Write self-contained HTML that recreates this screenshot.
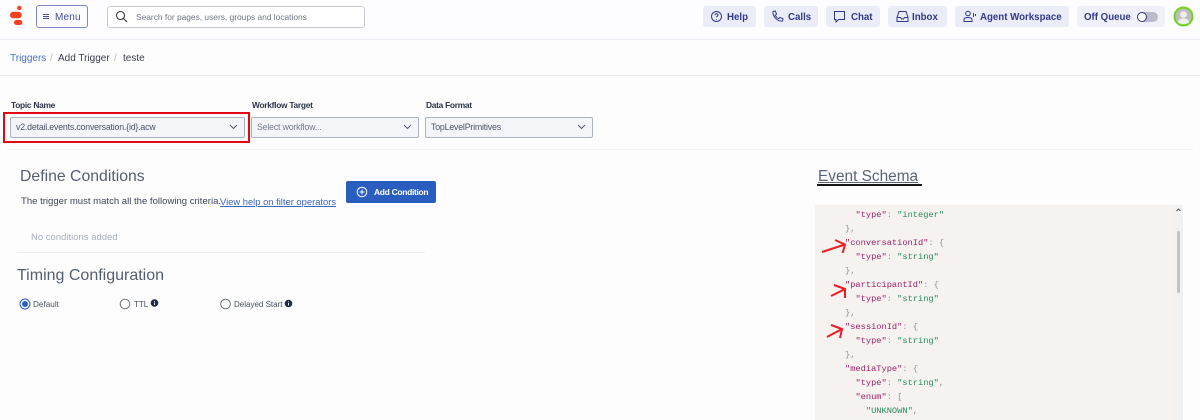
<!DOCTYPE html>
<html><head><meta charset="utf-8"><style>
html,body{margin:0;padding:0;width:1200px;height:420px;overflow:hidden;background:#fdfdfe;font-family:"Liberation Sans",sans-serif}
.a{position:absolute;white-space:nowrap}
.tb{position:absolute;top:6px;height:21px;background:#eaecf8;border-radius:3px;color:#33398a;font-weight:bold;font-size:9.7px;line-height:23px}
.tb span{position:absolute;top:0}
.tb svg{position:absolute;top:4px;left:7px}
.lab{position:absolute;top:98.500px;font-size:8.400px;letter-spacing:-.28px;font-weight:bold;color:#2c3448;line-height:12px;white-space:nowrap}
.sel{position:absolute;top:117px;height:19px;background:#f3f5f9;border:1px solid #adb2bf;border-radius:2px;font-size:8.800px;letter-spacing:-.19px;line-height:19px;color:#4c5468;white-space:nowrap}
.sel span{position:absolute;left:5px}
.sel svg{position:absolute;right:6px;top:6px}
.h{position:absolute;font-size:16px;color:#555e70;white-space:nowrap;line-height:20px}
.c{position:absolute;left:845px;font:8.700px/14px "Liberation Mono",monospace;white-space:pre;color:#8f959c}
.k{color:#a01f66}.s{color:#288a5c}
</style></head><body>
<div class="a" style="left:0;top:0;width:1200px;height:39px;background:#fdfdff;border-bottom:1px solid #e9e9f4"></div>
<svg class="a" style="left:9px;top:5px" width="14" height="22"><circle cx="10.300" cy="3" r="2.200" fill="#f5401e"/><rect x="1" y="6.700" width="11.700" height="6.600" rx="3.300" fill="#f5401e"/><rect x="5" y="15" width="8.300" height="5" rx="2.500" fill="#f5401e"/></svg>
<div class="a" style="left:36px;top:5px;width:50px;height:21px;border:1px solid #7d87c4;border-radius:3px;background:#fbfbff"></div>
<svg class="a" style="left:43px;top:14px" width="7" height="6"><path d="M0 .5H6M0 2.500H6M0 4.500H6" stroke="#4a51a0" stroke-width=".9"/></svg>
<div class="a" style="left:55px;top:7px;font-size:10px;line-height:21px;color:#454c9c;letter-spacing:.2px">Menu</div>
<div class="a" style="left:107px;top:6px;width:256px;height:20px;border:1px solid #c6c8d0;border-radius:3px;background:#fff"></div>
<svg class="a" style="left:115px;top:10px" width="13" height="13" fill="none" stroke="#30343c" stroke-width="1.100"><circle cx="5.500" cy="5.500" r="4"/><path d="M8.500 8.500L12 12"/></svg>
<div class="a" style="left:136px;top:6px;font-size:8.400px;line-height:22px;color:#6f7480">Search for pages, users, groups and locations</div>
<div class="tb" style="left:703px;width:53px"><svg width="13" height="13" fill="none" stroke="#33398a"><circle cx="6.500" cy="6.500" r="5"/><path d="M5 5.200c.2-2 3.200-1.800 3 0 0 1-1.500 1-1.500 2.200M6.500 9v.8"/></svg><span style="left:24px">Help</span></div>
<div class="tb" style="left:764px;width:54px"><svg width="13" height="13" fill="none" stroke="#33398a"><path d="M2 1.500L4.200 1l1.400 3L4.300 5.200c.7 1.700 1.900 2.900 3.500 3.500L9 7.400l3 1.400-.5 2.200c-5 .8-10-4.500-9.500-9.500z"/></svg><span style="left:24px">Calls</span></div>
<div class="tb" style="left:826px;width:54px"><svg width="13" height="13" fill="none" stroke="#33398a"><path d="M1.500 1.500h10v8H5.500L3 12V9.500H1.500z"/></svg><span style="left:25px">Chat</span></div>
<div class="tb" style="left:888px;width:59px"><svg width="13" height="13" style="left:8px" fill="none" stroke="#33398a"><path d="M3 1.500h7l2 6v4H1v-4zM1 7.500h3.500l1 1.500h2l1-1.500H12"/></svg><span style="left:24px">Inbox</span></div>
<div class="tb" style="left:955px;width:114px"><svg width="13" height="13" style="left:8px" fill="none" stroke="#33398a"><circle cx="5" cy="3.500" r="2.300"/><path d="M1 11.500V9.500c0-1.500 1.500-2 4-2s4 .5 4 2v2zM10.500 3v4M12.500 4v2"/></svg><span style="left:25px">Agent Workspace</span></div>
<div class="tb" style="left:1077px;width:88px;background:#eff0fa"><span style="left:7px">Off Queue</span></div>
<div class="a" style="left:1137px;top:12px;width:21px;height:10px;border-radius:5px;background:#b9bcc8"></div>
<div class="a" style="left:1137px;top:12px;width:8px;height:8px;border-radius:50%;border:1.200px solid #33398a;background:#fff"></div>
<svg class="a" style="left:1173px;top:6px" width="21" height="21"><circle cx="10.500" cy="10.500" r="9" fill="#bdbdbd" stroke="#72d41f" stroke-width="2"/><circle cx="10.500" cy="8.500" r="3.300" fill="#f0f0f0"/><path d="M5 16.500c0-5.500 11-5.500 11 0-3 2-8 2-11 0z" fill="#f0f0f0"/></svg>

<div class="a" style="left:10px;top:52px;font-size:10px;line-height:14px;color:#4a6fc0">Triggers</div>
<div class="a" style="left:50px;top:52px;font-size:10px;line-height:14px;color:#b5b8c0">/</div>
<div class="a" style="left:58px;top:52px;font-size:10px;line-height:14px;color:#3a3f4a">Add Trigger</div>
<div class="a" style="left:114px;top:52px;font-size:10px;line-height:14px;color:#b5b8c0">/</div>
<div class="a" style="left:123px;top:52px;font-size:10px;line-height:14px;color:#3a3f4a">teste</div>
<div class="a" style="left:0;top:75px;width:1200px;height:1px;background:#e9e9f0"></div>

<div class="lab" style="left:11px">Topic Name</div>
<div class="lab" style="left:252px">Workflow Target</div>
<div class="lab" style="left:426px">Data Format</div>
<div class="sel" style="left:10px;width:233px"><span>v2.detail.events.conversation.{id}.acw</span><svg width="9" height="6" fill="none" stroke="#555c6e"><path d="M1 1l3.500 3.500L8 1"/></svg></div>
<div class="sel" style="left:251px;width:166px;color:#767c8a"><span>Select workflow...</span><svg width="9" height="6" fill="none" stroke="#555c6e"><path d="M1 1l3.500 3.500L8 1"/></svg></div>
<div class="sel" style="left:425px;width:166px"><span>TopLevelPrimitives</span><svg width="9" height="6" fill="none" stroke="#555c6e"><path d="M1 1l3.500 3.500L8 1"/></svg></div>
<div class="a" style="left:3px;top:112px;width:243px;height:27px;border:2px solid #e30613"></div>
<div class="a" style="left:7px;top:149px;width:1186px;height:1px;background:#f0f0f3"></div>

<div class="h" style="left:20px;top:167px;font-size:15.800px">Define Conditions</div>
<div class="a" style="left:21px;top:194.500px;font-size:9.550px;line-height:13px;color:#3f4654">The trigger must match all the following criteria.</div>
<div class="a" style="left:220px;top:194.500px;font-size:9.400px;line-height:13px;color:#3f66bf;text-decoration:underline">View help on filter operators</div>
<div class="a" style="left:346px;top:181px;width:90px;height:22px;background:#2a5dc0;border-radius:2px"></div>
<svg class="a" style="left:356px;top:186px" width="12" height="12" fill="none" stroke="#fff"><circle cx="6" cy="6" r="4.800"/><path d="M6 3.500v5M3.500 6h5"/></svg>
<div class="a" style="left:374px;top:180.500px;font-size:8.500px;letter-spacing:-.33px;font-weight:bold;line-height:22px;color:#fff">Add Condition</div>
<div class="a" style="left:31px;top:231px;font-size:9.500px;line-height:13px;color:#a6adbb">No conditions added</div>
<div class="a" style="left:17px;top:252px;width:408px;height:1px;background:#eeeff2"></div>
<div class="h" style="left:17px;top:266px">Timing Configuration</div>
<svg class="a" style="left:19px;top:298px" width="13" height="13"><circle cx="6" cy="6" r="5" fill="#fff" stroke="#2a5dc0" stroke-width="1"/><circle cx="6" cy="6" r="3" fill="#2a5dc0"/></svg>
<div class="a" style="left:33px;top:298px;font-size:8.200px;line-height:13px;color:#4a505e">Default</div>
<svg class="a" style="left:119px;top:298px" width="13" height="13"><circle cx="6" cy="6" r="4.800" fill="#fff" stroke="#6e7380"/></svg>
<div class="a" style="left:134px;top:298px;font-size:8px;line-height:13px;color:#4a505e">TTL</div>
<svg class="a" style="left:150px;top:299px" width="9" height="9"><circle cx="4.500" cy="4" r="3.800" fill="#1f2a44"/><path d="M4.500 2v.8M4.500 3.500v2.500" stroke="#fff" stroke-width=".9"/></svg>
<svg class="a" style="left:219px;top:298px" width="13" height="13"><circle cx="6.500" cy="6" r="4.800" fill="#fff" stroke="#6e7380"/></svg>
<div class="a" style="left:234px;top:298px;font-size:8px;line-height:13px;color:#4a505e">Delayed Start</div>
<svg class="a" style="left:284px;top:299px" width="9" height="9"><circle cx="4.500" cy="4.500" r="3.800" fill="#1f2a44"/><path d="M4.500 2.500v.8M4.500 4v2.500" stroke="#fff" stroke-width=".9"/></svg>

<div class="h" style="left:818px;top:167px;font-size:15.400px;color:#5a6478;text-decoration:underline;text-decoration-thickness:1px">Event Schema</div>
<div class="a" style="left:817px;top:183.500px;width:105px;height:2px;background:#15161a"></div>

<div class="a" style="left:815px;top:205px;width:368px;height:215px;background:#f5f2f0;border-radius:2px 2px 0 0"></div>
<div class="a" style="left:1175px;top:205px;width:8px;height:215px;background:#f1f1f1"></div>
<div class="a" style="left:1176.500px;top:231px;width:3px;height:62px;background:#c2c2c2;border-radius:2px"></div>
<svg class="a" style="left:1174px;top:207px" width="8" height="6"><path d="M2.500 4L4.500 2 6.500 4" fill="none" stroke="#555" stroke-width="1"/></svg>

<div class="c" style="top:208px">  <span class="k">"type"</span>: <span class="s">"integer"</span></div>
<div class="c" style="top:222px">},</div>
<div class="c" style="top:235.500px"><span class="k">"conversationId"</span>: {</div>
<div class="c" style="top:249.500px">  <span class="k">"type"</span>: <span class="s">"string"</span></div>
<div class="c" style="top:264px">},</div>
<div class="c" style="top:278px"><span class="k">"participantId"</span>: {</div>
<div class="c" style="top:292px">  <span class="k">"type"</span>: <span class="s">"string"</span></div>
<div class="c" style="top:306px">},</div>
<div class="c" style="top:320px"><span class="k">"sessionId"</span>: {</div>
<div class="c" style="top:334px">  <span class="k">"type"</span>: <span class="s">"string"</span></div>
<div class="c" style="top:348px">},</div>
<div class="c" style="top:362px"><span class="k">"mediaType"</span>: {</div>
<div class="c" style="top:376px">  <span class="k">"type"</span>: <span class="s">"string"</span>,</div>
<div class="c" style="top:390px">  <span class="k">"enum"</span>: [</div>
<div class="c" style="top:404px">    <span class="s">"UNKNOWN"</span>,</div>

<svg class="a" style="left:815px;top:235px" width="40" height="120" fill="none" stroke="#ee1c25" stroke-width="2"><path d="M7 17L30 9.500M20 5l10 4.500L27.700 18"/><path d="M16 61L30 54M19 50l11 4L30 63"/><path d="M12 102L27 94M16 90l11 4L25 103"/></svg>
</body></html>
